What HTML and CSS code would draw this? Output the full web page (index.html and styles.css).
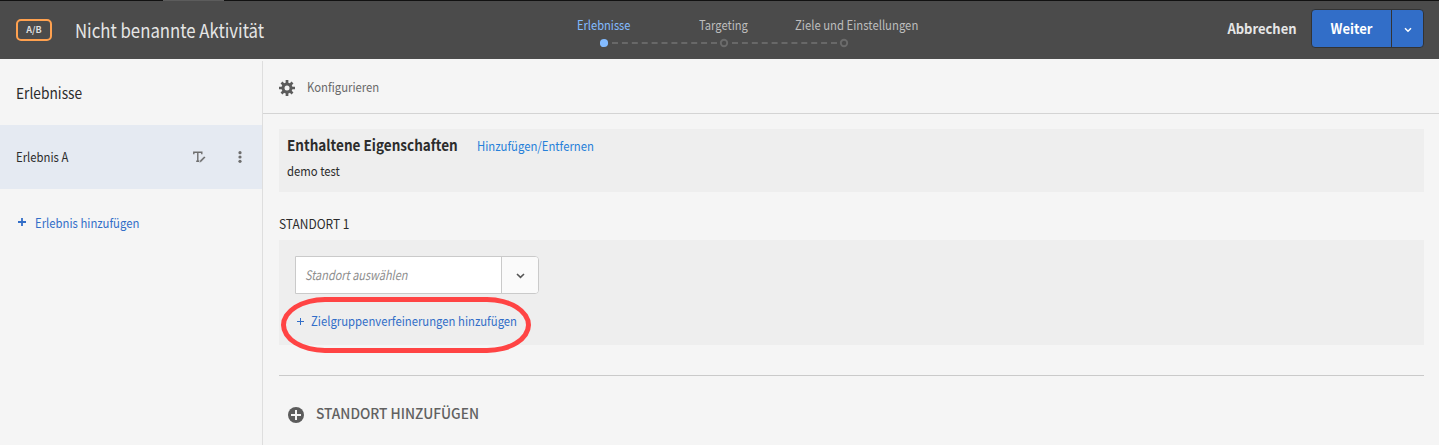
FILE: index.html
```
<!DOCTYPE html>
<html lang="de">
<head>
<meta charset="utf-8">
<title>Nicht benannte Aktivität</title>
<link rel="stylesheet" href="styles.css">
</head>
<body>
<header class="topbar">
  <span class="badge">A/B</span>
  <h1 class="title"><span class="n title-text">Nicht benannte Aktivität</span></h1>
  <nav class="steps">
    <div class="step-labels">
      <span class="n step-one">Erlebnisse</span>
      <span class="n step-two">Targeting</span>
      <span class="n">Ziele und Einstellungen</span>
    </div>
    <svg class="track" width="250" height="10" viewBox="0 0 250 10">
      <path d="M12 5H117M132 5H237" stroke="#686868" stroke-width="2" stroke-dasharray="6 3.9" fill="none"/>
      <circle cx="4" cy="5" r="4.1" fill="#83bbff"/>
      <circle cx="124" cy="5" r="3.2" fill="none" stroke="#6b6b6b" stroke-width="1.9"/>
      <circle cx="244" cy="5" r="3.2" fill="none" stroke="#6b6b6b" stroke-width="1.9"/>
    </svg>
  </nav>
  <div class="actions">
    <span class="n cancel">Abbrechen</span>
    <div class="split">
      <button class="next"><span class="n next-text">Weiter</span></button>
      <button class="more" aria-label="Mehr">
        <svg width="8" height="6" viewBox="0 0 8 6"><path d="M1 1.2 4 4.2 7 1.2" fill="none" stroke="#fff" stroke-width="1.5"/></svg>
      </button>
    </div>
  </div>
</header>
<div class="body">
  <aside class="sidebar">
    <h2 class="side-title"><span class="n side-title-text">Erlebnisse</span></h2>
    <div class="side-item">
      <span class="side-name"><span class="n">Erlebnis A</span></span>
      <svg class="rename" width="13" height="12" viewBox="0 0 13 12">
        <path d="M.8 3.3V1.2H8.8V3.3M4.8 1.2V10M3.2 10.3H6.2" fill="none" stroke="#6e6e6e" stroke-width="1.4"/>
        <path d="M6 11.8 6.8 9.5 11.2 5.2 12.6 6.5 8.3 10.9Z" fill="#6e6e6e" stroke="#e5eaf2" stroke-width=".5"/>
      </svg>
      <svg class="dots" width="4" height="12" viewBox="0 0 4 12" fill="#6e6e6e"><circle cx="2" cy="1.7" r="1.6"/><circle cx="2" cy="6" r="1.6"/><circle cx="2" cy="10.3" r="1.6"/></svg>
    </div>
    <div class="side-add">
      <svg width="8" height="8" viewBox="0 0 8 8"><path d="M4 0V8M0 4H8" stroke="#326ec8" stroke-width="1.8"/></svg>
      <span class="n">Erlebnis hinzufügen</span>
    </div>
  </aside>
  <main class="main">
    <div class="toolbar">
      <svg width="16" height="16" viewBox="-8 -8 16 16">
        <g stroke="#5c5c5c" stroke-width="2.7"><path d="M0-8V8M-8 0H8M-5.5-5.5 5.5 5.5M5.5-5.5-5.5 5.5"/></g>
        <circle r="5.5" fill="#5c5c5c"/><circle r="2.5" fill="#f5f5f5"/>
      </svg>
      <span class="n config">Konfigurieren</span>
    </div>
    <div class="content">
      <section class="props">
        <div class="props-head">
          <h3 class="props-title"><span class="n props-title-text">Enthaltene Eigenschaften</span></h3>
          <a class="n props-link">Hinzufügen/Entfernen</a>
        </div>
        <div class="props-value"><span class="n">demo test</span></div>
      </section>
      <h4 class="location-label"><span class="n location-text">STANDORT 1</span></h4>
      <section class="location">
        <div class="combo">
          <span class="field"><i class="n placeholder">Standort auswählen</i></span>
          <span class="drop"><svg width="9" height="6" viewBox="0 0 9 6"><path d="M1 1 4.5 4.3 8 1" fill="none" stroke="#555" stroke-width="1.6"/></svg></span>
        </div>
        <div class="refine">
          <svg width="7" height="7" viewBox="0 0 7 7"><path d="M3.5 0V7M0 3.5H7" stroke="#326ec8" stroke-width="1"/></svg>
          <span class="n">Zielgruppenverfeinerungen hinzufügen</span>
          <span class="highlight"></span>
        </div>
      </section>
      <div class="add-location">
        <svg width="16" height="16" viewBox="0 0 16 16"><circle cx="8" cy="8" r="8" fill="#5c5c5c"/><path d="M8 3V13M3 8H13" stroke="#f5f5f5" stroke-width="2"/></svg>
        <span class="n add-location-text">STANDORT HINZUFÜGEN</span>
      </div>
    </div>
  </main>
</div>
</body>
</html>
```
FILE: styles.css
```
* { box-sizing: border-box; }
body {
  margin: 0;
  height: 445px;
  overflow: hidden;
  background: #f5f5f5;
  color: #2c2c2c;
  font: 13px/20px "Noto Sans CJK SC", "Open Sans", sans-serif;
  white-space: nowrap;
}
h1, h2, h3, h4 { margin: 0; font-weight: 400; }
svg { display: block; flex: none; }
button { margin: 0; padding: 0; border: 0; font: inherit; color: inherit; background: none; }

/* narrowed interface lettering */
.n { display: inline-block; transform: scaleX(0.871); transform-origin: 0 50%; }

.topbar {
  display: flex;
  height: 59px;
  padding: 1px 15px 0 16px;
  background:
    linear-gradient(#5c5c5c, #5c5c5c) 163px 0 / 61px 1px no-repeat,
    linear-gradient(#111, #111) 0 0 / 100% 1px no-repeat,
    #4b4b4b;
}
.badge {
  width: 36px;
  height: 22px;
  margin-top: 18px;
  border: 2px solid #ffa14f;
  border-radius: 5px;
  color: #dedede;
  font-size: 9px;
  font-weight: 700;
  line-height: 18px;
  text-align: center;
}
.title { width: 502px; margin: 14px 0 0 23px; font-size: 19px; line-height: 30px; color: #e6e6e6; }
.title-text { transform: scaleX(0.882); }
.steps { width: 360px; padding-top: 14px; }
.step-labels { display: grid; grid-template-columns: 122px 96px auto; color: #bdbdbd; }
.step-one { color: #83bbff; transform: scaleX(0.855); }
.step-two { transform: scaleX(0.86); }
.track { margin: 3px 0 0 23px; }
.actions { display: flex; margin-left: auto; padding-top: 8px; }
.cancel { margin: 9px 14px 0 0; font-size: 14px; font-weight: 700; color: #e6e6e6; transform: scaleX(0.927); transform-origin: 100% 50%; }
.split { display: flex; width: 113px; height: 39px; border: 1px solid #333; border-radius: 4px; background: #326ec8; color: #fff; }
.next { width: 80px; padding-bottom: 2px; border-right: 1px solid #333; font-size: 14px; font-weight: 700; }
.next-text { transform: scaleX(0.93); transform-origin: 50% 50%; }
.more { display: flex; flex: 1; align-items: center; justify-content: center; padding-top: 3px; }

.body { display: flex; height: 386px; }
.sidebar { width: 263px; margin-top: 2px; border-right: 1px solid #dedede; }
.side-title { height: 64px; padding: 22px 0 0 16px; font-size: 15px; }
.side-title-text { transform: scaleX(0.917); }
.side-item { display: flex; align-items: center; height: 64px; padding-left: 16px; background: #e5eaf2; }
.side-name { width: 177px; }
.dots { margin-left: 32px; }
.side-add { display: flex; align-items: center; gap: 9px; padding: 24px 0 0 18px; color: #326ec8; }
.side-add svg { margin-top: -3px; }

.main { flex: 1; }
.toolbar { display: flex; align-items: center; gap: 12px; height: 55px; padding: 3px 0 0 16px; border-bottom: 1px solid #d4d4d4; color: #696969; }
.config { margin-bottom: 2px; }
.content { padding: 15px 15px 0 16px; }
.props { height: 63px; padding: 7px 8px; background: #eee; }
.props-head { display: flex; }
.props-title { width: 190px; margin-top: -1px; font-size: 15px; font-weight: 700; }
.props-title-text { transform: scaleX(0.902); }
.props-link { color: #2680d9; }
.props-value { margin-top: 5px; }
.location-label { height: 48px; padding-top: 22px; font-size: 13px; }
.location-text { transform: scaleX(0.92); }
.location { height: 105px; padding: 16px; background: #eee; }
.combo { display: flex; width: 244px; height: 38px; border: 1px solid #cacaca; border-radius: 0 4px 4px 0; background: #fff; }
.field { width: 205px; padding: 8px 0 0 9px; color: #8e8e8e; }
.placeholder { transform: scaleX(0.842); }
.drop { display: flex; flex: 1; align-items: center; justify-content: center; padding-top: 2px; border-left: 1px solid #cacaca; background: #fafafa; border-radius: 0 3px 3px 0; }
.refine { position: relative; display: flex; align-items: center; gap: 7px; margin-top: 17px; padding-left: 2px; color: #326ec8; }
.highlight { position: absolute; left: -14px; top: -14px; width: 250px; height: 56px; border: 5px solid #ff4444; border-radius: 44px / 28px; }
.add-location { display: flex; align-items: center; gap: 12px; height: 78px; margin-top: 30px; padding-left: 9px; border-top: 1px solid #cacaca; color: #616161; font-size: 14px; font-weight: 500; }
.add-location-text { margin-bottom: 4px; transform: scaleX(0.98); }
```
